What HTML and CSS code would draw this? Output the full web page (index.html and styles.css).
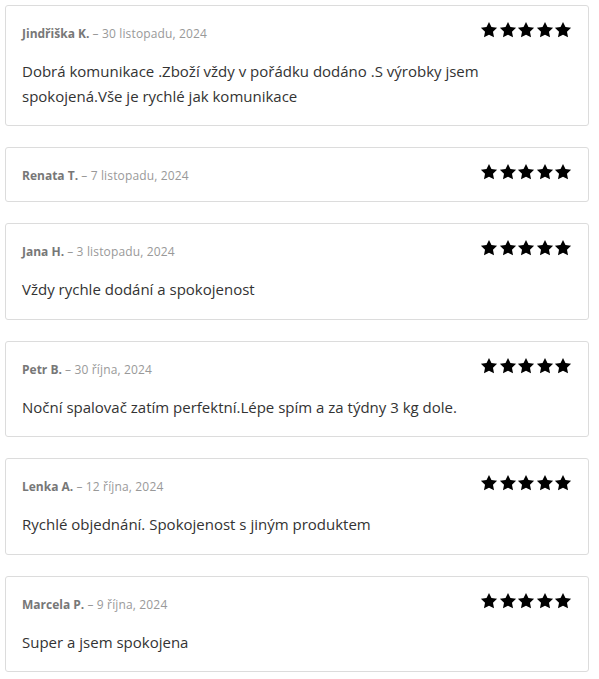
FILE: index.html
```html
<!DOCTYPE html>
<html lang="cs">
<head>
  <meta charset="UTF-8">
  <meta name="viewport" content="width=device-width, initial-scale=1">
  <title>Recenze</title>
  <link rel="stylesheet" href="styles.css">
</head>
<body>
  <svg width="0" height="0" class="defs">
    <symbol id="star" viewBox="0 0 24 24">
      <path d="M12 1.2l3.3 6.9 7.5 1-5.5 5.2 1.4 7.5L12 18.2l-6.7 3.6 1.4-7.5L1.2 9.1l7.5-1z"/>
    </symbol>
  </svg>

  <div class="reviews">
    <div class="review">
      <div class="review-head">
        <p class="meta"><strong>Jindřiška K.</strong> <span class="date">– 30 listopadu, 2024</span></p>
        <div class="stars">
          <svg><use href="#star"/></svg><svg><use href="#star"/></svg><svg><use href="#star"/></svg><svg><use href="#star"/></svg><svg><use href="#star"/></svg>
        </div>
      </div>
      <p class="text">Dobrá komunikace .Zboží vždy v pořádku dodáno .S výrobky jsem spokojená.Vše je rychlé jak komunikace</p>
    </div>

    <div class="review">
      <div class="review-head">
        <p class="meta"><strong>Renata T.</strong> <span class="date">– 7 listopadu, 2024</span></p>
        <div class="stars">
          <svg><use href="#star"/></svg><svg><use href="#star"/></svg><svg><use href="#star"/></svg><svg><use href="#star"/></svg><svg><use href="#star"/></svg>
        </div>
      </div>
    </div>

    <div class="review">
      <div class="review-head">
        <p class="meta"><strong>Jana H.</strong> <span class="date">– 3 listopadu, 2024</span></p>
        <div class="stars">
          <svg><use href="#star"/></svg><svg><use href="#star"/></svg><svg><use href="#star"/></svg><svg><use href="#star"/></svg><svg><use href="#star"/></svg>
        </div>
      </div>
      <p class="text">Vždy rychle dodání a spokojenost</p>
    </div>

    <div class="review">
      <div class="review-head">
        <p class="meta"><strong>Petr B.</strong> <span class="date">– 30 října, 2024</span></p>
        <div class="stars">
          <svg><use href="#star"/></svg><svg><use href="#star"/></svg><svg><use href="#star"/></svg><svg><use href="#star"/></svg><svg><use href="#star"/></svg>
        </div>
      </div>
      <p class="text">Noční spalovač zatím perfektní.Lépe spím a za týdny 3 kg dole.</p>
    </div>

    <div class="review">
      <div class="review-head">
        <p class="meta"><strong>Lenka A.</strong> <span class="date">– 12 října, 2024</span></p>
        <div class="stars">
          <svg><use href="#star"/></svg><svg><use href="#star"/></svg><svg><use href="#star"/></svg><svg><use href="#star"/></svg><svg><use href="#star"/></svg>
        </div>
      </div>
      <p class="text">Rychlé objednání. Spokojenost s jiným produktem</p>
    </div>

    <div class="review">
      <div class="review-head">
        <p class="meta"><strong>Marcela P.</strong> <span class="date">– 9 října, 2024</span></p>
        <div class="stars">
          <svg><use href="#star"/></svg><svg><use href="#star"/></svg><svg><use href="#star"/></svg><svg><use href="#star"/></svg><svg><use href="#star"/></svg>
        </div>
      </div>
      <p class="text">Super a jsem spokojena</p>
    </div>
  </div>
</body>
</html>
```

FILE: styles.css
```css
body {
  margin: 0;
  background: #fff;
  font-family: 'Open Sans', sans-serif;
  color: #333;
}

.defs {
  position: absolute;
}

.reviews {
  display: flex;
  flex-direction: column;
  gap: 21px;
  padding: 5px 10px 5px 5px;
}

.review {
  border: 1px solid #dcdcdc;
  border-radius: 3px;
  padding: 16px 16px 13px 16px;
}

.review-head {
  display: flex;
  justify-content: space-between;
  align-items: flex-start;
}

.meta {
  margin: 0;
  font-size: 12px;
  line-height: 24px;
  color: #777;
}

.meta strong {
  font-weight: 700;
}

.date {
  color: #999;
  letter-spacing: 0.15px;
}

.stars {
  display: flex;
  gap: 0.5px;
  margin-top: -1px;
}

.stars svg {
  width: 18px;
  height: 18px;
  fill: #000;
}

.text {
  margin: 13px 0 4px;
  font-size: 15px;
  line-height: 24.5px;
  color: #333;
}
```
